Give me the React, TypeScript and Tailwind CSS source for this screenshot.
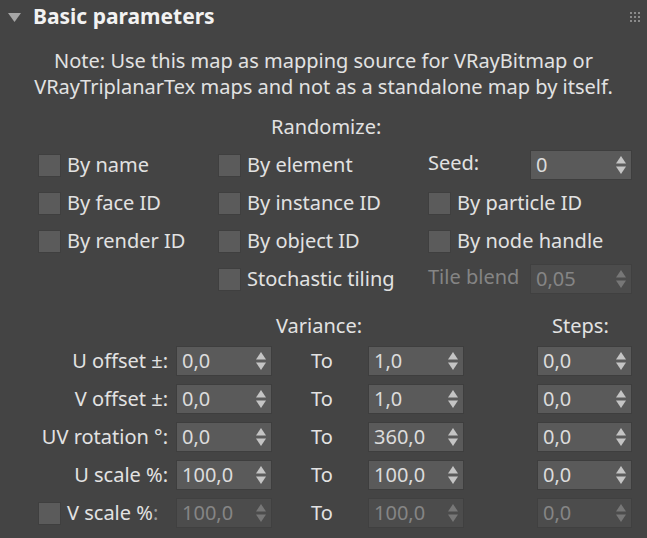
import React from 'react'

const font = { fontFamily: '"Noto Sans", "Open Sans", sans-serif' }

function Arrows({ disabled }: { disabled?: boolean }) {
  const c = disabled ? '#777777' : '#c4c4c4'
  return (
    <svg width="12" height="20" viewBox="0 0 12 20" className="shrink-0">
      <path d="M6 1 L11 8.5 L1 8.5 Z" fill={c} />
      <path d="M1 11.5 L11 11.5 L6 19 Z" fill={c} />
    </svg>
  )
}

function Spinner({ value, disabled, w = 'w-[96px]' }: { value: string; disabled?: boolean; w?: string }) {
  return (
    <div
      className={`${w} h-[30px] flex items-center justify-between pl-[5px] pr-[4px] border ${
        disabled ? 'bg-[#4c4c4c] border-[#404040] text-[#858585]' : 'bg-[#5a5a5a] border-[#3e3e3e] text-[#dcdcdc]'
      }`}
    >
      <span className="leading-none">{value}</span>
      <Arrows disabled={disabled} />
    </div>
  )
}

function Check({ label, disabled }: { label?: string; disabled?: boolean }) {
  return (
    <div className="flex items-center gap-[6px]">
      <div className="w-[23px] h-[23px] bg-[#5b5b5b] border border-[#3f3f3f] shrink-0" />
      {label && <span className={disabled ? 'text-[#858585]' : 'text-[#e2e2e2]'}>{label}</span>}
    </div>
  )
}

function Row({ label, a, b, c, lead, disabled }: { label: React.ReactNode; a: string; b: string; c: string; lead?: boolean; disabled?: boolean }) {
  return (
    <div className="h-[38px] flex items-center">
      {lead ? (
        <div className="w-[168px] flex items-center pl-[38px] overflow-hidden">
          <Check />
          <span className="ml-[6px] whitespace-nowrap">{label}</span>
        </div>
      ) : (
        <div className="w-[168px] flex items-center justify-end">
          <span className="whitespace-nowrap">{label}</span>
        </div>
      )}
      <div className="ml-[8px]"><Spinner value={a} disabled={disabled} /></div>
      <div className="w-[40px] ml-[39px]">To</div>
      <div className="ml-[17px]"><Spinner value={b} disabled={disabled} /></div>
      <div className="ml-[73px]"><Spinner value={c} disabled={disabled} w="w-[95px]" /></div>
    </div>
  )
}

export default function App() {
  return (
    <div className="w-[647px] h-[538px] bg-[#444444] text-[#e2e2e2] text-[20px] overflow-hidden" style={font}>
      {/* header */}
      <div className="h-[34px] flex items-center relative">
        <svg width="13" height="9" viewBox="0 0 13 9" className="ml-[8px]">
          <path d="M0 0 L13 0 L6.5 9 Z" fill="#a6a6a6" />
        </svg>
        <span className="ml-[12px] font-bold text-[#f2f2f2] text-[21px]">Basic parameters</span>
        <div className="ml-auto mr-[7px] grid grid-cols-3 gap-[2px]">
          {Array.from({ length: 9 }).map((_, i) => (
            <div key={i} className="w-[2px] h-[2px] bg-[#8a8a8a]" />
          ))}
        </div>
      </div>

      {/* note */}
      <div className="mt-[14px] text-center leading-[26px]">
        <div>Note: Use this map as mapping source for VRayBitmap or</div>
        <div>VRayTriplanarTex maps and not as a standalone map by itself.</div>
      </div>

      <div className="mt-[14px] leading-[26px] pl-[271px]">Randomize:</div>

      {/* randomize grid */}
      <div className="mt-[6px] pl-[38px]">
        <div className="h-[38px] flex items-center">
          <div className="w-[180px]"><Check label="By name" /></div>
          <div className="w-[210px]"><Check label="By element" /></div>
          <div className="w-[102px] -mt-[4px]">Seed:</div>
          <Spinner value="0" w="w-[102px]" />
        </div>
        <div className="h-[38px] flex items-center">
          <div className="w-[180px]"><Check label="By face ID" /></div>
          <div className="w-[210px]"><Check label="By instance ID" /></div>
          <Check label="By particle ID" />
        </div>
        <div className="h-[38px] flex items-center">
          <div className="w-[180px]"><Check label="By render ID" /></div>
          <div className="w-[210px]"><Check label="By object ID" /></div>
          <Check label="By node handle" />
        </div>
        <div className="h-[38px] flex items-center">
          <div className="w-[180px]" />
          <div className="w-[210px]"><Check label="Stochastic tiling" /></div>
          <div className="w-[102px] -mt-[4px] text-[#858585]">Tile blend</div>
          <Spinner value="0,05" disabled w="w-[102px]" />
        </div>
      </div>

      {/* variance header */}
      <div className="mt-[15px] h-[26px] flex items-center">
        <span className="ml-[276px]">Variance:</span>
        <span className="ml-[190px]">Steps:</span>
      </div>

      <div className="mt-[3px]">
        <Row label="U offset ±:" a="0,0" b="1,0" c="0,0" />
        <Row label="V offset ±:" a="0,0" b="1,0" c="0,0" />
        <Row label="UV rotation °:" a="0,0" b="360,0" c="0,0" />
        <Row label="U scale %:" a="100,0" b="100,0" c="0,0" />
        <Row
          label={<>V scale %<span className="text-[#9a9a9a]">:</span></>}
          a="100,0"
          b="100,0"
          c="0,0"
          lead
          disabled
        />
      </div>
    </div>
  )
}
